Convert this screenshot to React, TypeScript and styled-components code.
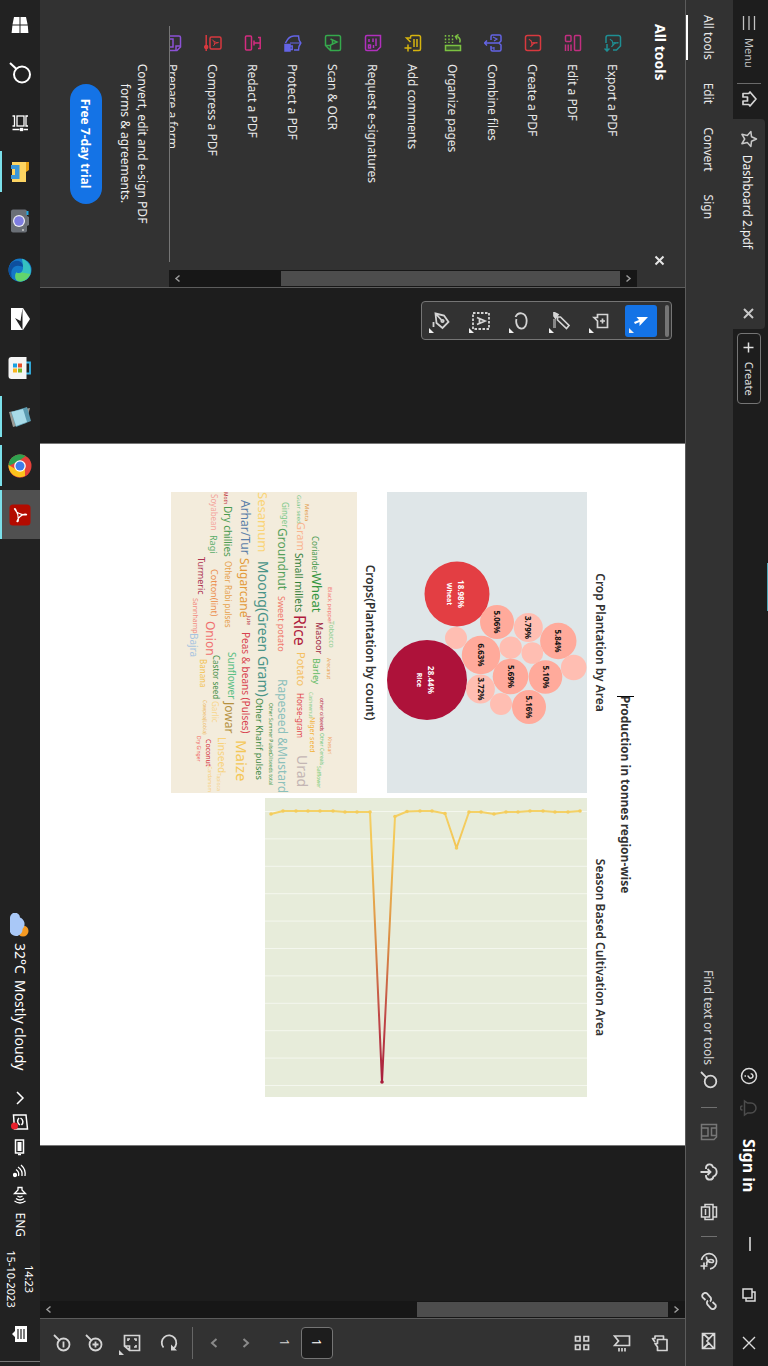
import React from "react";
import styled, { createGlobalStyle } from "styled-components";

const Global = createGlobalStyle`
  * { box-sizing: border-box; }
  body { margin: 0; background: #1d1d1d; overflow: hidden; }
  button { background: none; border: 0; padding: 0; margin: 0; font: inherit; color: inherit; }
`;

/* The desktop is turned a quarter clockwise, as on a portrait-mounted display. */
const Viewport = styled.div`
  width: 100vw;
  height: 100vh;
  overflow: hidden;
`;
const Desktop = styled.div`
  width: 100vh;
  height: 100vw;
  transform: rotate(90deg) translateY(-100%);
  transform-origin: 0 0;
  display: flex;
  flex-direction: column;
  position: relative;
  background: #1d1d1d;
  color: #e6e6e6;
  font-family: "Noto Sans", "Open Sans", sans-serif;
  font-size: 12px;
  line-height: 16px;
`;

/* ---------- icons ---------- */
const Svg = styled.svg<{ $size?: number; $w?: number }>`
  width: ${(p) => p.$size ?? 18}px;
  height: ${(p) => p.$size ?? 18}px;
  flex: none;
  display: block;
  fill: none;
  stroke: currentColor;
  stroke-width: ${(p) => p.$w ?? 1.5};
`;
type IconProps = { children: React.ReactNode; size?: number; box?: number; w?: number };
const Icon = ({ children, size = 18, box = 18, w }: IconProps) => (
  <Svg viewBox={`0 0 ${box} ${box}`} $size={size} $w={w} aria-hidden="true">
    {children}
  </Svg>
);
const Swirl = ({ t }: { t?: string }) => (
  <path transform={t} strokeWidth="1.2" d="M5 13 Q8 11 9 7 Q9 4.500 8.600 5 Q8.800 9 13 11.500 M6.600 11 Q9 9.800 12 10" />
);

/* ---------- title bar ---------- */
const TitleBar = styled.header`
  height: 35px;
  flex: none;
  display: flex;
  align-items: stretch;
  padding-top: 3px;
  background: #1d1d1d;
`;
const MenuButton = styled.button`
  display: flex;
  align-items: center;
  gap: 7px;
  padding: 0 15px;
  font-size: 11px;
  color: #c2c2c2;
`;
const HomeButton = styled.button`
  width: 36px;
  margin: 4px 0;
  padding-left: 6px;
  border-left: 1px solid #6a6a6a;
  color: #d4d4d4;
`;
const Tab = styled.div`
  width: 210px;
  display: flex;
  align-items: center;
  gap: 7px;
  padding: 0 10px 0 11px;
  background: #323232;
  border-radius: 4px 4px 0 0;
  color: #c8c8c8;
`;
const TabName = styled.span`
  flex: 1;
  padding-top: 3px;
  color: #f2f2f2;
`;
const CreateButton = styled.button`
  display: flex;
  align-items: center;
  gap: 8px;
  height: 24px;
  margin: 4px 0 0 4px;
  padding: 0 7px;
  border: 1px solid #757575;
  border-radius: 4px;
  font-size: 11px;
  color: #e0e0e0;
`;
const TitleEnd = styled.div`
  margin-left: auto;
  display: flex;
  align-items: center;
  color: #dcdcdc;
`;
const TitleIcon = styled.button<{ $gap: number; $dim?: boolean }>`
  margin-right: ${(p) => p.$gap}px;
  color: ${(p) => (p.$dim ? "#4c4c4c" : "inherit")};
`;
const SignIn = styled.button`
  width: 52px;
  margin-right: 44px;
  text-align: left;
  white-space: nowrap;
  font-size: 16px;
  font-weight: 700;
  color: #ffffff;
`;
const CyanMark = styled.div`
  position: absolute;
  top: 0;
  left: 563px;
  width: 48px;
  height: 1px;
  background: #4fa9b8;
`;

/* ---------- menu bar ---------- */
const MenuBar = styled.div`
  height: 48px;
  flex: none;
  display: flex;
  align-items: stretch;
  padding: 0 16px 0 15px;
  background: #323232;
  border-bottom: 1px solid #5c5c5c;
`;
const Modes = styled.nav`
  display: flex;
  gap: 23px;
`;
const Mode = styled.button<{ $on?: boolean }>`
  padding-top: 4px;
  border-bottom: 2px solid ${(p) => (p.$on ? "#ffffff" : "transparent")};
  color: #e8e8e8;
`;
const Tools = styled.div`
  margin-left: auto;
  display: flex;
  align-items: center;
  gap: 22px;
  color: #d8d8d8;
`;
const Find = styled.button`
  display: flex;
  align-items: center;
  gap: 6px;
  margin-right: 3px;
  span { padding-top: 2px; }
`;
const ToolIcon = styled.button<{ $dim?: boolean }>`
  color: ${(p) => (p.$dim ? "#777777" : "inherit")};
`;
const Rule = styled.span`
  width: 1px;
  height: 16px;
  margin: 0 -7px;
  background: #707070;
`;

/* ---------- body ---------- */
const Body = styled.div`
  flex: 1;
  min-height: 0;
  display: flex;
`;
const Side = styled.aside`
  width: 288px;
  flex: none;
  display: flex;
  flex-direction: column;
  background: #323232;
  border-right: 1px solid #5c5c5c;
`;
const SideHead = styled.div`
  height: 48px;
  flex: none;
  display: flex;
  align-items: center;
  justify-content: space-between;
  padding: 2px 21px 0 24px;
`;
const SideTitle = styled.h2`
  margin: 0;
  font-size: 14px;
  font-weight: 700;
  color: #ffffff;
`;
const ScrollArea = styled.div`
  flex: 1;
  min-height: 0;
  display: flex;
`;
const List = styled.ul`
  flex: 1;
  margin: 0 8px 0 26px;
  padding: 4px 0 0 8px;
  overflow: hidden;
  list-style: none;
  border-bottom: 1px solid #757575;
`;
const Item = styled.li`
  height: 40px;
`;
const ItemButton = styled.button<{ $color: string }>`
  display: flex;
  align-items: center;
  gap: 12px;
  height: 40px;
  color: ${(p) => p.$color};
  span { padding-top: 2px; color: #e8e8e8; }
`;
const Bar = styled.div`
  width: 17px;
  flex: none;
  display: flex;
  flex-direction: column;
  background: #171717;
  color: #9a9a9a;
`;
const Arrow = styled.button`
  height: 17px;
  display: grid;
  place-items: center;
`;
const Track = styled.div`
  flex: 1;
  padding: 0 1px;
`;
const Thumb = styled.div<{ $part: number }>`
  height: ${(p) => p.$part}%;
  background: #4d4d4d;
`;
const Promo = styled.div`
  height: 129px;
  flex: none;
  display: flex;
  flex-direction: column;
  align-items: center;
  padding-top: 18px;
  text-align: center;
  line-height: 17px;
  color: #f0f0f0;
`;
const TrialButton = styled.button`
  width: 120px;
  height: 32px;
  margin-top: 15px;
  border-radius: 16px;
  background: #1473e6;
  color: #ffffff;
  font-weight: 700;
`;
const Viewer = styled.main`
  flex: 1;
  min-width: 0;
  position: relative;
  display: flex;
  justify-content: center;
  background: #1d1d1d;
`;
const FloatBar = styled.div`
  position: absolute;
  left: 13px;
  top: 13px;
  width: 39px;
  display: flex;
  flex-direction: column;
  align-items: center;
  gap: 8px;
  padding: 2px 0 3px;
  background: #323232;
  border: 1px solid #757575;
  border-radius: 4px;
  color: #d4d4d4;
`;
const Handle = styled.span`
  width: 32px;
  height: 4px;
  border-radius: 2px;
  background: #757575;
`;
const FloatTool = styled.button<{ $on?: boolean }>`
  position: relative;
  width: 32px;
  height: 32px;
  display: grid;
  place-items: center;
  border-radius: 3px;
  background: ${(p) => (p.$on ? "#1473e6" : "transparent")};
  color: ${(p) => (p.$on ? "#ffffff" : "inherit")};
  &::after {
    content: "";
    position: absolute;
    right: 4px;
    bottom: 4px;
    border-left: 5px solid transparent;
    border-bottom: 5px solid #f0f0f0;
  }
`;
const Sheet = styled.article`
  width: 100%;
  max-width: 703px;
  padding: 51px 48px 0;
  background: #ffffff;
  border: solid #777777;
  border-width: 0 1px;
  color: #333333;
`;
const SheetTitle = styled.h1`
  margin: 0;
  font-size: 12px;
  line-height: 18px;
  font-weight: 700;
  text-align: center;
`;
const Caret = styled.span`
  display: inline-block;
  width: 1px;
  height: 17px;
  margin-right: -1px;
  vertical-align: top;
  background: #000000;
`;
const Charts = styled.div`
  display: grid;
  grid-template-columns: 301fr 299fr;
  gap: 5px;
  margin-top: 7px;
`;
const Chart = styled.figure`
  margin: 0 0 8px;
  svg { display: block; width: 100%; }
`;
const Caption = styled.figcaption`
  height: 22px;
  font-size: 12px;
  font-weight: 600;
  line-height: 18px;
  text-align: center;
`;
const Rail = styled.aside`
  width: 48px;
  flex: none;
  display: flex;
  flex-direction: column;
  align-items: center;
  padding: 6px 0;
  background: #323232;
  border-left: 1px solid #5c5c5c;
  color: #d4d4d4;
`;
const RailButton = styled.button<{ $h?: number; $dim?: boolean }>`
  position: relative;
  height: ${(p) => p.$h ?? 38}px;
  display: grid;
  align-content: center;
  color: ${(p) => (p.$dim ? "#8a8a8a" : "inherit")};
`;
const FitMark = styled.span`
  position: absolute;
  right: -3px;
  bottom: 9px;
  border-left: 5px solid transparent;
  border-bottom: 5px solid #d4d4d4;
`;
const PageInput = styled.input`
  width: 32px;
  height: 32px;
  margin-top: auto;
  padding: 0;
  text-align: center;
  font: inherit;
  color: #ffffff;
  background: #1d1d1d;
  border: 1px solid #757575;
  border-radius: 4px;
`;
const PageCount = styled.span`
  height: 39px;
  line-height: 34px;
`;
const RailRule = styled.span`
  width: 32px;
  height: 1px;
  margin: 5px 0 8px;
  background: #666666;
`;

/* ---------- taskbar ---------- */
const Taskbar = styled.footer`
  height: 40px;
  flex: none;
  display: flex;
  align-items: stretch;
  background: #222222;
  color: #ffffff;
`;
const TaskButton = styled.button<{ $state?: "open" | "active" }>`
  width: 49px;
  display: grid;
  place-items: center;
  background: ${(p) => (p.$state === "active" ? "#505050" : "transparent")};
  position: relative;
  &::after {
    content: "";
    position: absolute;
    bottom: 0;
    left: ${(p) => (p.$state === "active" ? 0 : 4)}px;
    right: ${(p) => (p.$state === "active" ? 0 : 4)}px;
    height: ${(p) => (p.$state ? 2 : 0)}px;
    background: #7be0ea;
  }
`;
const Tray = styled.div`
  margin-left: auto;
  display: flex;
  align-items: center;
`;
const Weather = styled.button`
  display: flex;
  align-items: center;
  gap: 6px;
  margin-right: 21px;
  font-size: 14px;
`;
const TrayIcons = styled.div`
  display: flex;
  align-items: center;
  gap: 8px;
`;
const Clock = styled.time`
  width: 60px;
  margin: 0 16px 0 12px;
  text-align: center;
  font-size: 11px;
  line-height: 18px;
  white-space: nowrap;
`;
const DesktopEdge = styled.span`
  width: 1px;
  align-self: stretch;
  margin: 0 4px 0 18px;
  background: #777777;
`;

/* ---------- data ---------- */
const tools: { name: string; color: string; art: React.ReactNode }[] = [
  { name: "Export a PDF", color: "#1f8f94", art: <><path d="M9 16H3.500a2 2 0 0 1-2-2V3.500a2 2 0 0 1 2-2H12l4 4V9" /><Swirl t="translate(0 -1)" /><path d="M10 15h7M14.500 12.500L17 15l-2.500 2.500" /></> },
  { name: "Edit a PDF", color: "#c22f80", art: <><rect x="1.500" y="1.500" width="15" height="6" rx="1" /><rect x="1.500" y="11" width="6" height="5.500" rx="1" /><path d="M10.500 11H17M10.500 13.800H17M10.500 16.500H17" /></> },
  { name: "Create a PDF", color: "#d8393f", art: <><rect x="1.500" y="1.500" width="15" height="15" rx="2" /><Swirl /></> },
  { name: "Combine files", color: "#6464e6", art: <><path d="M6 11H2.500a1.500 1.500 0 0 1-1.500-1.500v-7A1.500 1.500 0 0 1 2.500 1H7l2 2v8M9 3l2-2h4.500A1.500 1.500 0 0 1 17 2.500v7a1.500 1.500 0 0 1-1.500 1.500H12M9 9v8.500M6.500 15L9 17.500l2.500-2.500" /><path strokeWidth="1.100" d="M3 9l2-4 2 3M13 8h3M14 8v3" /></> },
  { name: "Organize pages", color: "#7cc242", art: <><rect x="11.500" y="1.500" width="5" height="15" fill="#3d5630" /><path strokeDasharray="1.800 1.600" d="M1 9.500h8M1 13h8M1 16.500h8" /><path d="M2.500 6.500a4 4 0 0 1 6-4M.5 3.500l2 3 3-1.500" /></> },
  { name: "Add comments", color: "#d6b40f", art: <><path d="M16.500 9V3A1.500 1.500 0 0 0 15 1.500H3A1.500 1.500 0 0 0 1.500 3v7A1.500 1.500 0 0 0 3 11.500h1v4l4-4M5 5h8M5 8h8M14 10.500v7M10.500 14h7" /></> },
  { name: "Request e-signatures", color: "#b130bd", art: <><path d="M1.500 1.500H13l3.500 3.500v10a1.500 1.500 0 0 1-1.500 1.500H3A1.500 1.500 0 0 1 1.500 15z" /><path d="M4.500 6H12M4.500 9H8M11 8.500h3M5 13h3" /><rect x="11" y="11.500" width="3" height="2" /></> },
  { name: "Scan & OCR", color: "#35a94c", art: <><path d="M11.500 16.500H3A1.500 1.500 0 0 1 1.500 15V3A1.500 1.500 0 0 1 3 1.500h12A1.500 1.500 0 0 1 16.500 3v8.500zM11.500 16v-4.500h5" /><path d="M5 11.500L8 5l3 6.500M6 9.500h4" /></> },
  { name: "Protect a PDF", color: "#6464e6", art: <><path d="M9 16.500C4.500 14.500 2 11.500 2 8V3.500Q6 3.500 9 1.200q3 2.300 7 2.300V8" /><path d="M9 2v10" strokeWidth="1" /><rect x="10.500" y="12" width="6.500" height="5" fill="currentColor" /><path d="M12 12V9.800h3.500V12" /></> },
  { name: "Redact a PDF", color: "#d42c80", art: <><rect x="2" y="10.500" width="14" height="6" rx="1" /><path d="M3.500 4V1.800h11V4M9 1.800v6M6.500 8h5" /></> },
  { name: "Compress a PDF", color: "#d8393f", art: <><rect x="3" y="1" width="12" height="11" rx="1.500" /><Swirl t="translate(1.500 -.5) scale(.8)" /><path d="M1 15.800h16" /><circle cx="13" cy="15.800" r="1.500" fill="currentColor" /></> },
  { name: "Prepare a form", color: "#8c52d6", art: <><path d="M2 17V3A1.500 1.500 0 0 1 3.500 1.500H13L16.500 5v12" /><rect x="5" y="9" width="8" height="5" /><path d="M12 2v4h4" /></> },
];

type Bubble = [x: number, y: number, r: number, label?: string, name?: string];
const bubbles: Bubble[] = [
  [102, 130, 32.5, "18.98%", "Wheat"],
  [188, 160, 40, "28.44%", "Rice"],
  [130, 90, 17, "5.06%"],
  [135.5, 58.7, 14.5, "3.79%"],
  [149, 28.7, 18.2, "5.84%"],
  [155.7, 76.3, 11.2],
  [161, 54.7, 10.8],
  [175.5, 13.3, 12.8],
  [146, 131, 11],
  [163, 106, 19.2, "6.63%"],
  [184.5, 76.5, 17.8, "5.69%"],
  [185, 41.5, 16.8, "5.10%"],
  [215, 58, 17, "5.16%"],
  [197, 106.5, 14.4, "3.72%"],
  [212, 86, 11],
];
const bubbleFill = (r: number) => (r > 35 ? "#ae123a" : r > 30 ? "#e33e43" : r > 16 ? "#ffaa9b" : "#ffbeb2");

type Word = [text: string, x: number, y: number, size: number, color: string];
const words: Word[] = [
  ["Black pepper", 95, 29, 6, "#f47a75"], ["Tobacco", 129, 28, 7, "#8fce92"], ["Arecanut", 166, 30, 5, "#e9a04c"], ["Khesari", 245, 29, 5, "#f0a35c"],
  ["Mesta", 12, 52, 6, "#e29a4a"], ["Coriander", 44, 45, 8, "#4a9a50"], ["Wheat", 81, 45, 13, "#35963f"], ["Masoor", 130, 41, 9, "#a02a44"],
  ["Barley", 166, 44, 9, "#5cb860"], ["Cashewnut", 200, 48, 5, "#8fd08d"], ["Niger seed", 225, 47, 7, "#f2b33c"], ["other oilseeds", 206, 37, 5, "#b5264a"],
  ["Other Cereals", 241, 37, 5, "#6cc77d"], ["Safflower", 274, 40, 5, "#7ccd79"], ["Guar seed", 3, 60, 6, "#79c78b"], ["Gram", 30, 60, 11, "#f9b590"],
  ["Small millets", 61, 62, 10, "#34803a"], ["Rice", 123, 63, 16, "#b01c3e"], ["Potato", 160, 60, 11, "#f4bf62"], ["Horse-gram", 201, 60, 8, "#e2444b"],
  ["Urad", 263, 60, 14, "#c4b6b4"], ["Ginger", 10, 75, 8, "#7ec98a"], ["Groundnut", 36, 79, 12, "#55a05a"], ["Sweet potato", 104, 79, 9, "#f07a6c"],
  ["Rapeseed &Mustard", 187, 79, 12, "#8cc0bb"], ["Other Summer Pulses", 211, 88, 5, "#3c8c40"], ["Oilseeds total", 261, 88, 5, "#4aa058"],
  ["Sesamum", 0, 99, 13, "#fad476"], ["Moong(Green Gram)", 69, 99, 14, "#4a9488"], ["Other Kharif pulses", 206, 101, 9, "#3d8a45"],
  ["Arhar/Tur", 8, 116, 12, "#5b7fa8"], ["Sugarcane", 66, 117, 12, "#e39a3a"], ["Jute", 124, 110, 5, "#b8323f"], ["Peas & beans (Pulses)", 140, 115, 10, "#d8434f"],
  ["Maize", 248, 121, 15, "#f3c758"], ["Moth", 0, 133, 5, "#c03040"], ["Dry chillies", 14, 133, 10, "#4b9b50"], ["Other Rabi pulses", 69, 132, 8, "#e6a04a"],
  ["Sunflower", 160, 129, 10, "#5cbf85"], ["Jowar", 210, 132, 12, "#b5913f"], ["Linseed", 245, 139, 10, "#f8d27a"], ["Tapioca", 281, 140, 5, "#f3d18a"],
  ["Soyabean", 2, 146, 8, "#f4a59c"], ["Ragi", 43, 147, 9, "#5aad6a"], ["Cotton(lint)", 77, 146, 9, "#ec8f4e"], ["Onion", 129, 151, 12, "#f0706f"],
  ["Castor seed", 163, 144, 8, "#3f8f45"], ["Garlic", 209, 145, 8, "#f8d68c"], ["Coconut", 247, 151, 7, "#d3303c"], ["Cardamom", 274, 149, 5, "#f7cf80"],
  ["Turmeric", 65, 159, 9, "#ac3050"], ["Banana", 167, 157, 8, "#f2c14e"], ["Cowpea(Lobia)", 208, 154, 5, "#edb860"], ["Dry Ginger", 244, 160, 5, "#f0605a"],
  ["Sannhamp", 106, 164, 7, "#f28a80"], ["Bajra", 141, 167, 10, "#a8c4e0"],
];

/* area value against season, drawn down the panel */
const series: [number, number][] = [
  [13, 7], [14, 19], [14, 32], [13, 44], [13, 57], [14, 69], [14, 81], [16, 93], [14, 106], [14, 118], [50, 130.5], [15.5, 142], [13, 155], [13, 167], [13.5, 180],
  [18.5, 192], [284, 205], [14, 217], [14, 230], [14, 242], [13, 254], [13, 267], [13, 279], [13, 291], [13, 304], [16, 316],
];

const ScrollBar = ({ part }: { part: number }) => (
  <Bar>
    <Arrow aria-label="Scroll up"><Icon size={9} box={9}><path d="M1.500 6.500l3-3.500 3 3.500" /></Icon></Arrow>
    <Track><Thumb $part={part} /></Track>
    <Arrow aria-label="Scroll down"><Icon size={9} box={9}><path d="M1.500 2.500l3 3.500 3-3.500" /></Icon></Arrow>
  </Bar>
);

const taskIcons: { name: string; state?: "open" | "active"; art: React.ReactNode }[] = [
  { name: "Start", art: <g fill="#fff" stroke="none"><path d="M4 6l7.500-1.600V11.500H4zM12.500 4.200L20 3.600v7.900h-7.500zM4 12.500h7.500v7L4 18zM12.500 12.500H20V20.400l-7.500-.8z" /></g> },
  { name: "Search", art: <g stroke="#fff" strokeWidth="2"><circle cx="12.500" cy="10" r="8" /><path d="M6.800 15.800L1 22" /></g> },
  { name: "Task View", art: <g stroke="#fff" strokeWidth="1.300"><rect x="5" y="8" width="10" height="7" /><path d="M5 4v2h10V4M5 19.500v-2h10v2M18.500 4v4.500M18.500 12.500v7" /><rect x="17.500" y="9.500" width="2" height="2" fill="#fff" /></g> },
  { name: "File Explorer", state: "open", art: <g stroke="none"><path d="M2 3h8l2 3h10v14H2z" fill="#e6a117" /><path d="M2 6h20v14H2z" fill="#fcd462" /><path d="M5 12.500h14v8.500h-4v-4H9v4H5z" fill="#3a96d8" /></g> },
  { name: "Camera", art: <g stroke="none"><path d="M8 3h8l2 4H6z" fill="#71767c" /><rect x="0.500" y="5" width="23" height="16" rx="2" fill="#6a6f76" /><rect x="2" y="3.500" width="4" height="2" fill="#21a6e0" /><circle cx="12" cy="13" r="6" fill="#f0f0f4" /><circle cx="12" cy="13" r="4.800" fill="#7e7de0" /><circle cx="21" cy="9" r="1" fill="#c8c8c8" /></g> },
  { name: "Edge", art: <g stroke="none"><circle cx="12" cy="12" r="11.500" fill="#1478c8" /><path d="M.8 10C3 2 13-2 20 4c3 3 4.500 8 2.500 11-2 2.500-7 2-8 .5 1.500-3 0-6-4-6.500-4-.4-8 1-9.700 1z" fill="#35c1c0" /><path d="M16 1.500c6 3 9 9 6.500 13.500-2 2.500-7 2-8 .5 1.200-2 1-4 0-5.500z" fill="#62d46c" /><path d="M8 13c-1 5 4 9.500 12 7-5 5.500-15 4-17-3-1-5 2-8 6-8-1 1-1 3-1 4z" fill="#0d4f9e" /></g> },
  { name: "Mail", art: <g stroke="none"><path d="M1 9h22v12H1z" fill="#fff" /><path d="M1 9L12 2l11 7z" fill="#fff" /><path d="M1 9.500h22L11 17l3-5.500z" fill="#222" /></g> },
  { name: "Microsoft Store", art: <g stroke="none"><path d="M6.500 7V2h11v5" fill="none" stroke="#35b6ea" strokeWidth="1.800" /><path d="M1 5.500h22V20.500a3 3 0 0 1-3 3H4a3 3 0 0 1-3-3z" fill="#f5f5f5" /><path d="M7.500 10H11.500v4H7.500z" fill="#e8502a" /><path d="M12.500 10h4v4h-4z" fill="#7ab929" /><path d="M7.500 15H11.500v4H7.500z" fill="#1aa0e0" /><path d="M12.500 15h4v4h-4z" fill="#fab51e" /></g> },
  { name: "Notepad", state: "open", art: <g stroke="none"><path d="M3 2l15 4 4 13-15 4z" fill="#9a9a94" /><path d="M2 5l14-4 6 15-15 5z" fill="#5b9bb0" /><path d="M4 9l13-4 4 11-14 4.500z" fill="#a8dbe8" /></g> },
  { name: "Chrome", state: "open", art: <g stroke="none"><circle cx="12" cy="12" r="11.500" fill="#e5413a" /><path d="M12 23.500L8 15 2 6.200A11.500 11.500 0 0 0 12 23.500z" fill="#2fa14f" /><path d="M22 7a11.500 11.500 0 0 1-11 16.500L16.500 14 13 7z" fill="#fbc21c" /><circle cx="12" cy="12" r="5.800" fill="#fff" /><circle cx="12" cy="12" r="4.500" fill="#3f7eea" /></g> },
  { name: "Acrobat", state: "active", art: <g stroke="none"><rect x="1.500" y="1.500" width="21" height="21" rx="3.500" fill="#b30b00" /><path d="M6 17.500c3-1.500 5.500-5.500 6-11 .2-1.800-1.400-1-.8.8 1 3.500 3.500 6.500 7 7.700.8.200.8-1.300-.6-1.300-3.600-.2-7.600.6-11 2.600-1.200.8-1 1.400-.6 1.200z" stroke="#fff" strokeWidth="1.200" fill="none" /></g> },
];

export default function App() {
  return (
    <Viewport>
      <Global />
      <Desktop>
        <CyanMark />
        <TitleBar>
          <MenuButton>
            <Icon size={16} box={16} w={1.3}><path d="M1 2.500h14M1 8h14M1 13.500h14" /></Icon>
            Menu
          </MenuButton>
          <HomeButton aria-label="Home">
            <Icon><path d="M9 2l7 6-1.500 1.200V15h-3.500v-4.500H7V15H3.500V9.200L2 8z" strokeLinejoin="round" strokeWidth="1.700" /></Icon>
          </HomeButton>
          <Tab>
            <Icon><path d="M9 1.500l2.200 5 5.300.6-4 3.600 1.200 5.400L9 13.300l-4.700 2.800 1.200-5.400-4-3.600 5.300-.6z" strokeLinejoin="round" /></Icon>
            <TabName>Dashboard 2.pdf</TabName>
            <button aria-label="Close tab"><Icon size={11} box={11} w={2}><path d="M1 1l9 9M10 1l-9 9" /></Icon></button>
          </Tab>
          <CreateButton>
            <Icon size={13} box={13}><path d="M6.500 1.500v10M1.500 6.500h10" /></Icon>
            Create
          </CreateButton>
          <TitleEnd>
            <TitleIcon $gap={14} aria-label="Help"><Icon><circle cx="9" cy="9" r="7.500" /><path d="M6.800 7.300a2.200 2.200 0 1 1 3 2c-.6.300-.8.600-.8 1.200M9 12v1.500" /></Icon></TitleIcon>
            <TitleIcon $gap={22} $dim aria-label="Notifications"><Icon><path d="M2 13.500h14l-2-3V7A5 5 0 0 0 4 7v3.500zM7 15.500a2 2 0 0 0 4 0" /></Icon></TitleIcon>
            <SignIn>Sign in</SignIn>
            <TitleIcon $gap={34} aria-label="Minimize"><Icon size={18} w={1.6}><path d="M2 8h14" /></Icon></TitleIcon>
            <TitleIcon $gap={33} aria-label="Restore"><Icon size={16} box={16}><path d="M2 5h9v9H2zM5 4.500V2h9v9h-2.500" /></Icon></TitleIcon>
            <TitleIcon $gap={16} aria-label="Close"><Icon size={14} box={14} w={1.4}><path d="M1 1l12 12M13 1L1 13" /></Icon></TitleIcon>
          </TitleEnd>
        </TitleBar>

        <MenuBar>
          <Modes>
            <Mode $on>All tools</Mode>
            <Mode>Edit</Mode>
            <Mode>Convert</Mode>
            <Mode>Sign</Mode>
          </Modes>
          <Tools>
            <Find>
              <span>Find text or tools</span>
              <Icon w={1.8}><circle cx="10.500" cy="7.500" r="5.800" /><path d="M6.300 11.700L1 17" /></Icon>
            </Find>
            <Rule />
            <ToolIcon $dim aria-label="Save"><Icon><path d="M1.500 1.500H14l2.500 2.500v12.500h-15zM5 2v4.500h7.500V2M5 16v-6h8v6" /></Icon></ToolIcon>
            <ToolIcon aria-label="Upload"><Icon w={1.8}><path d="M6 12H4.500a3.500 3.500 0 0 1-.5-6.900A5 5 0 0 1 13.500 4.500 3.800 3.800 0 0 1 13.500 12H12M9 17.500V8M6 10.500L9 7.500l3 3" /></Icon></ToolIcon>
            <ToolIcon aria-label="Print"><Icon><path d="M4 5V1.500h10V5M4 13H1.500V5h15v8H14" /><rect x="4" y="8.500" width="10" height="8" /><path d="M6 12.500h6" /></Icon></ToolIcon>
            <Rule />
            <ToolIcon aria-label="Fill and sign"><Icon w={1.700}><path d="M16.800 8A7.600 7.600 0 1 0 8 16.500M4.500 11.500c3 .5 6-2 6-5s-3-2.500-3 .5 2 5 5.500 4M14 10.500v7M10.500 14h7" /></Icon></ToolIcon>
            <ToolIcon aria-label="Share link"><Icon w={1.800}><path d="M8 12.500l-2.500 2.800a3 3 0 0 1-4-4.300L5 7.800a3 3 0 0 1 4.500.2M10 5.500l2.500-2.800a3 3 0 0 1 4 4.300L13 10.200a3 3 0 0 1-4.500-.2" /></Icon></ToolIcon>
            <ToolIcon aria-label="Send by email"><Icon w={1.700}><path d="M1.500 3.500h15v12h-15zM1.500 4l7.500 7 7.500-7M1.500 15l5.500-6M16.500 15L11 9" /></Icon></ToolIcon>
          </Tools>
        </MenuBar>

        <Body>
          <Side>
            <SideHead>
              <SideTitle>All tools</SideTitle>
              <button aria-label="Close panel"><Icon size={11} box={11} w={2}><path d="M1.500 1.500l8 8M9.500 1.500l-8 8" /></Icon></button>
            </SideHead>
            <ScrollArea>
              <List>
                {tools.map((t) => (
                  <Item key={t.name}>
                    <ItemButton $color={t.color}>
                      <Icon>{t.art}</Icon>
                      <span>{t.name}</span>
                    </ItemButton>
                  </Item>
                ))}
              </List>
              <ScrollBar part={78} />
            </ScrollArea>
            <Promo>
              Convert, edit and e-sign PDF
              <br />
              forms &amp; agreements.
              <TrialButton>Free 7-day trial</TrialButton>
            </Promo>
          </Side>

          <Viewer>
            <Sheet>
              <SheetTitle><Caret />Production in tonnes region-wise</SheetTitle>
              <Charts>
                <div>
                  <Chart>
                    <Caption>Crop Plantation by Area</Caption>
                    <svg viewBox="0 0 301 200" role="img" aria-label="Crop Plantation by Area">
                      <rect width="301" height="200" fill="#dfe6e8" />
                      {bubbles.map(([x, y, r, label, name], i) => (
                        <g key={i} fontSize="8" fontWeight="700" textAnchor="middle" fill={name ? "#fff" : "#111"}>
                          <circle cx={x} cy={y} r={r} fill={bubbleFill(r)} />
                          {label && <text x={x} y={name ? y - 1 : y + 3}>{label}</text>}
                          {name && <text x={x} y={y + 10} fontSize="7">{name}</text>}
                        </g>
                      ))}
                    </svg>
                  </Chart>
                  <Chart>
                    <Caption>Crops(Plantation by count)</Caption>
                    <svg viewBox="0 0 301 186" role="img" aria-label="Crops by plantation count">
                      <rect width="301" height="186" fill="#f3ecdc" />
                      {words.map(([text, x, y, size, color]) => (
                        <text key={text} x={x} y={y} fontSize={size} fill={color}>{text}</text>
                      ))}
                    </svg>
                  </Chart>
                </div>
                <Chart>
                  <Caption>Season Based Cultivation Area</Caption>
                  <svg viewBox="0 0 299 322" role="img" aria-label="Season Based Cultivation Area">
                    <defs>
                      <linearGradient id="heat" gradientUnits="userSpaceOnUse" x1="13" y1="0" x2="284" y2="0">
                        <stop offset="0" stopColor="#f4d166" />
                        <stop offset=".14" stopColor="#f3c453" />
                        <stop offset=".5" stopColor="#d98a45" />
                        <stop offset=".75" stopColor="#c14a48" />
                        <stop offset="1" stopColor="#a81c3c" />
                      </linearGradient>
                    </defs>
                    <rect width="299" height="322" fill="#e7ecda" />
                    {Array.from({ length: 11 }, (_, i) => (
                      <path key={i} d={`M${13.5 + i * 27.4} 0V322`} stroke="#f4f7ee" />
                    ))}
                    <polyline points={series.map((p) => p.join(",")).join(" ")} fill="none" stroke="url(#heat)" strokeWidth="2" strokeLinejoin="round" />
                    {series.map(([x, y]) => (
                      <circle key={y} cx={x} cy={y} r="1.800" fill={x > 200 ? "#a81c3c" : "#f4cc5c"} />
                    ))}
                  </svg>
                </Chart>
              </Charts>
            </Sheet>
            <FloatBar>
              <Handle />
              <FloatTool $on aria-label="Select"><Icon><path d="M5 2v11.500l3-2.500 2 5 2-1-2-4.500h4z" fill="currentColor" stroke="none" /></Icon></FloatTool>
              <FloatTool aria-label="Comment"><Icon w={1.700}><path d="M2.500 2.500h13v10H9l-3.500 3.500v-3.500h-3zM9 5v5M6.500 7.500h5" /></Icon></FloatTool>
              <FloatTool aria-label="Highlight"><Icon w={1.700}><path d="M13.500 1l3 2.500-8.500 9H5V9.500z" /><path d="M2.500 12l3.500 2.500-2 1.500H.5z" fill="currentColor" /><path d="M7 15.500h9" stroke="#888" strokeWidth="3" /></Icon></FloatTool>
              <FloatTool aria-label="Draw"><Icon w={1.800}><path d="M5 14.500C-.5 12 0 4.500 7 3.500c6-.8 10 2 9.500 5.500-.5 4-6 5.500-9.500 4.500" /></Icon></FloatTool>
              <FloatTool aria-label="Select text"><Icon w={1.800}><rect x="1" y="1" width="16" height="16" strokeDasharray="2.500 1.500" /><path d="M5.500 13L9 5l3.500 8M7 10.500h4" /></Icon></FloatTool>
              <FloatTool aria-label="Sign"><Icon w={1.800}><path d="M1.500 14.500L3.500 6l6.500-4.500 6 6L11 13.500zM1.500 14.500L8 8.500M10 16.500h5" /><circle cx="9" cy="7.500" r="1.200" /></Icon></FloatTool>
            </FloatBar>
          </Viewer>
          <ScrollBar part={41} />

          <Rail>
            <RailButton aria-label="Comments"><Icon w={1.700}><path d="M5.500 2h11v9.500H13L9.500 14v-2.500h-4zM5 5.500H2V14h2.500v2.500L8 14" strokeLinejoin="round" /></Icon></RailButton>
            <RailButton aria-label="Bookmarks"><Icon w={1.700}><path d="M2 1.500h9.500v15L7 12.500 2 16.500zM14 6h3.500M14 9h3.500M14 12h3.500" /></Icon></RailButton>
            <RailButton $h={42} aria-label="Page thumbnails"><Icon w={1.700}><path d="M2.500 2.500H7V7H2.500zM11 2.500h4.500V7H11zM2.500 11H7v4.500H2.500zM11 11h4.500v4.500H11z" /></Icon></RailButton>
            <PageInput aria-label="Page number" defaultValue="1" />
            <PageCount>1</PageCount>
            <RailButton $h={32} $dim aria-label="Previous page"><Icon size={12} box={12} w={2}><path d="M2 8.500l4-4.500 4 4.500" /></Icon></RailButton>
            <RailButton $h={32} $dim aria-label="Next page"><Icon size={12} box={12} w={2}><path d="M2 3.500L6 8l4-4.500" /></Icon></RailButton>
            <RailRule />
            <RailButton $h={30} aria-label="Rotate"><Icon w={1.800}><path d="M13.500 14.500A7.300 7.300 0 1 1 14.500 4.500" /><path d="M16.500 1v6h-6z" fill="currentColor" stroke="none" /></Icon></RailButton>
            <RailButton $h={44} aria-label="Fit page"><Icon w={1.700}><path d="M12 16.500H1.500v-15h15V11.500zM12 16.500v-5h4.500M5 7V5h2M5 11v2h2M11 5h2v2" /></Icon><FitMark /></RailButton>
            <RailButton $h={32} aria-label="Zoom in"><Icon w={1.800}><circle cx="10.500" cy="7.500" r="6" /><path d="M6.200 11.800L1 17M10.500 4.500v6M7.500 7.500h6" /></Icon></RailButton>
            <RailButton $h={32} aria-label="Zoom out"><Icon w={1.800}><circle cx="10.500" cy="7.500" r="6" /><path d="M6.200 11.800L1 17M7.500 7.500h6" /></Icon></RailButton>
          </Rail>
        </Body>

        <Taskbar>
          {taskIcons.map((t) => (
            <TaskButton key={t.name} $state={t.state} aria-label={t.name}>
              <Icon size={24} box={24}>{t.art}</Icon>
            </TaskButton>
          ))}
          <Tray>
            <Weather>
              <Icon size={24} box={24}><g stroke="none"><circle cx="18" cy="9" r="5.500" fill="#f59a22" /><path d="M5 22a5 5 0 0 1-.5-10A7 7 0 0 1 16 9.500a6.500 6.500 0 0 1 3 12.500z" fill="#a9c8f7" /></g></Icon>
              <span>32°C</span>
              <span>Mostly cloudy</span>
            </Weather>
            <TrayIcons>
              <Icon size={14} box={14}><path d="M1 10l6-6 6 6" /></Icon>
              <Icon><path d="M2 3l14-1.500v13L2 15.500zM5 8.500c2-3 5-3 7-1M12 9c-2 3-5 3-7 1" /><circle cx="13" cy="14.500" r="3.500" fill="#e8202c" stroke="none" /></Icon>
              <Icon size={17} box={17}><path d="M1 4.500h13v8H1z" /><path d="M15.500 7v3" /><path d="M3 6.500h9v4H3z" fill="#fff" stroke="none" /></Icon>
              <Icon size={14} box={14} w={1.300}><path d="M1 6a12 12 0 0 1 11-4M3 9a9 9 0 0 1 9-4M5.500 11a6 6 0 0 1 6.500-2.500" /><circle cx="11" cy="12" r="1.500" fill="#fff" /></Icon>
              <Icon w={1.300}><path d="M1.500 7H4l3.500-3.500v11L4 11H1.500zM10 6.500q2 2.500 0 5M12.500 5q3 4 0 8M15 3.500q4 5.500 0 11" /></Icon>
              <span>ENG</span>
            </TrayIcons>
            <Clock>14:23<br />15-10-2023</Clock>
            <Icon size={18}><path d="M1 2h16v12h-5l-3 3-3-3H1z" fill="#fff" stroke="none" /><path d="M4 5h10M4 8h10M4 11h10" stroke="#222" strokeWidth="1.200" /></Icon>
            <DesktopEdge />
          </Tray>
        </Taskbar>
      </Desktop>
    </Viewport>
  );
}
